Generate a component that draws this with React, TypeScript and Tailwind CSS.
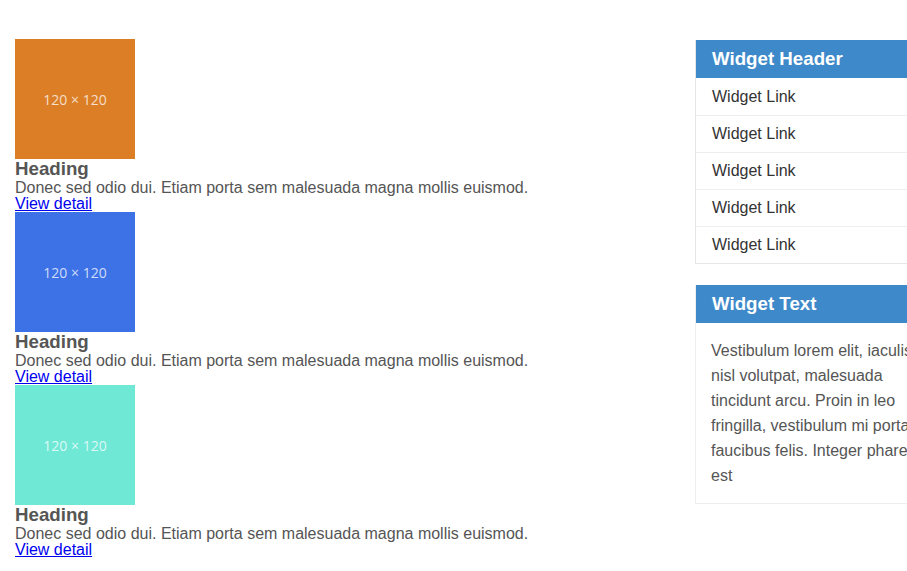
const items = [
  { color: "bg-[#db7e26]" },
  { color: "bg-[#3d72e7]" },
  { color: "bg-[#70e8d6]" },
];

const links = ["Widget Link", "Widget Link", "Widget Link", "Widget Link", "Widget Link"];

function Card({ color }: { color: string }) {
  return (
    <div className="flex flex-col items-start">
      <div className={`w-[120px] h-[120px] ${color} flex items-center justify-center`}>
        <span className="text-[14px] text-white/75 font-['Open_Sans',sans-serif]">120 × 120</span>
      </div>
      <h3 className="text-[18.72px] leading-[20px] font-bold text-[#555]">Heading</h3>
      <p className="text-[16px] leading-[17px] text-[#555]">Donec sed odio dui. Etiam porta sem malesuada magna mollis euismod.</p>
      <a href="#" className="text-[16px] leading-[16px] text-[#0000ee] underline">View detail</a>
    </div>
  );
}

export default function App() {
  return (
    <div className="w-[907px] h-[571px] overflow-hidden bg-white font-['Liberation_Sans',Arial,sans-serif]">
      <div className="w-[980px] flex pt-[39px] pl-[15px]">
        <div className="w-[680px] flex flex-col">
          {items.map((it, i) => (
            <Card key={i} color={it.color} />
          ))}
        </div>
        <aside className="w-[254px] flex flex-col gap-[21px] pt-px">
          <div className="border-x border-b border-[#e6e6e6]">
            <div className="bg-[#3e89c9] h-[38px] px-4 flex items-center">
              <h4 className="text-[18.72px] font-bold text-white">Widget Header</h4>
            </div>
            <ul>
              {links.map((l, i) => (
                <li key={i} className={`h-[37px] px-4 flex items-center text-[16px] text-[#333] ${i > 0 ? "border-t border-[#eee]" : ""}`}>
                  {l}
                </li>
              ))}
            </ul>
          </div>
          <div className="border-x border-b border-[#eee]">
            <div className="bg-[#3e89c9] h-[38px] px-4 flex items-center">
              <h4 className="text-[18.72px] font-bold text-white">Widget Text</h4>
            </div>
            <p className="px-[15px] pt-[15px] pb-[15px] text-[16px] leading-[25px] text-[#555]">
              Vestibulum lorem elit, iaculis nisl volutpat, malesuada tincidunt arcu. Proin in leo fringilla, vestibulum mi porta faucibus felis. Integer pharetra est
            </p>
          </div>
        </aside>
      </div>
    </div>
  );
}
